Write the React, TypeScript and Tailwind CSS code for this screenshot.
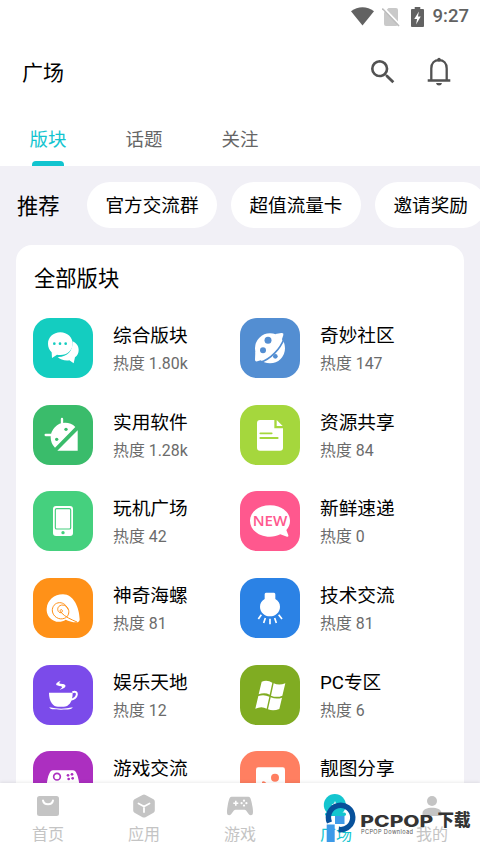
import type { ReactNode } from "react";

const tabs = ["版块", "话题", "关注"];
const chips = ["官方交流群", "超值流量卡", "邀请奖励"];

type Board = {
	name: string;
	heat: string;
	color: string;
	icon: ReactNode;
};

const boards: Board[] = [
	{
		name: "综合版块",
		heat: "1.80k",
		color: "bg-[#14cdc0]",
		icon: (
			<>
				<path d="M119 70c11 5 18 14 18 26 0 9-4 17-11 22l-4 18-13-9c-14 2-27-2-35-10 28 1 46-17 45-47z" />
				<path d="M82 43c21 0 37 15 37 34s-16 34-37 34c-4 0-7 0-10-1l-15 10-1-17c-7-7-11-16-11-26 0-19 16-34 37-34z" />
				<g fill="#14cdc0">
					<circle cx="64" cy="77" r="4" />
					<circle cx="81" cy="77" r="4" />
					<circle cx="98" cy="77" r="4" />
				</g>
			</>
		),
	},
	{
		name: "奇妙社区",
		heat: "147",
		color: "bg-[#538ed2]",
		icon: (
			<>
				<circle cx="90" cy="91" r="45" />
				<path d="M46 100l-1 25q0 7 7 5l20-6zM106 48l18-3q8-1 6 6l-7 22z" />
				<path
					d="M60 133C92 124 121 92 132 62"
					fill="none"
					stroke="#538ed2"
					strokeWidth="5"
				/>
				<g fill="#538ed2">
					<circle cx="84" cy="67" r="10.500" />
					<circle cx="69" cy="97" r="9" />
					<circle cx="106" cy="115" r="7" />
				</g>
			</>
		),
	},
	{
		name: "实用软件",
		heat: "1.28k",
		color: "bg-[#3abc6b]",
		icon: (
			<>
				<path d="M66 128A39 39 0 0 1 127 66z" />
				<path d="M134 76v61H73z" />
				<path
					d="M87 42v20M38 90h22"
					fill="none"
					stroke="#fff"
					strokeWidth="7"
					strokeLinecap="round"
				/>
				<circle cx="99" cy="73" r="5" fill="#3abc6b" />
				<circle cx="71" cy="103" r="5" fill="#3abc6b" />
			</>
		),
	},
	{
		name: "资源共享",
		heat: "84",
		color: "bg-[#a5d73d]",
		icon: (
			<>
				<path d="M60 45h43v25h26v58q0 9-9 9H60q-9 0-9-9V54q0-9 9-9z" />
				<path d="M110 45l18 18h-18z" />
				<path
					d="M61 85h34M61 99h52"
					fill="none"
					stroke="#a5d73d"
					strokeWidth="5.500"
					strokeLinecap="round"
				/>
			</>
		),
	},
	{
		name: "玩机广场",
		heat: "42",
		color: "bg-[#45d07e]",
		icon: (
			<>
				<rect x="60" y="45" width="60" height="90" rx="9" />
				<rect
					x="67"
					y="53"
					width="46"
					height="61"
					rx="4"
					fill="none"
					stroke="#45d07e"
					strokeWidth="3.500"
				/>
				<circle cx="90" cy="125" r="5" fill="#45d07e" />
			</>
		),
	},
	{
		name: "新鲜速递",
		heat: "0",
		color: "bg-[#ff588e]",
		icon: (
			<>
				<path d="M90 43c34 0 60 20 60 46 0 11-4 20-11 28l6 16q1 5-4 4l-20-7c-9 5-20 7-31 7-34 0-60-21-60-48s26-46 60-46z" />
				<text
					x="90"
					y="104"
					fill="#ff588e"
					fontSize="43"
					fontWeight="600"
					textAnchor="middle"
					textLength="104"
					lengthAdjust="spacingAndGlyphs"
					className="font-['Open_Sans',sans-serif]"
				>
					NEW
				</text>
			</>
		),
	},
	{
		name: "神奇海螺",
		heat: "81",
		color: "bg-[#ff9118]",
		icon: (
			<>
				<path d="M140 124c0 6-4 10-10 9-13 0-23-4-32-8-10 7-24 9-35 3-16-7-23-22-22-36 2-25 22-43 49-43 32 0 49 40 50 75z" />
				<path
					d="M132 132c-16-7-36-15-48-29-5-5-2-9 2-8 4 2 2 8-2 9-9 1-13-11-7-18 10-11 27-2 30 11 2 11-3 20-13 24-16 6-34-5-36-22-1-13 8-25 22-25 12 0 21 9 25 20"
					fill="none"
					stroke="#ff9118"
					strokeWidth="3"
				/>
			</>
		),
	},
	{
		name: "技术交流",
		heat: "81",
		color: "bg-[#2b82e5]",
		icon: (
			<>
				<path d="M78 44h24q4 0 4 5v14c9 5 14 13 14 23 0 16-13 29-30 29s-30-13-30-29c0-10 5-18 14-23V49q0-5 4-5z" />
				<path
					d="M64 110l-9 13M76 120l-5 15M90 122v17M104 120l5 15M116 110l10 13"
					fill="none"
					stroke="#fff"
					strokeWidth="5"
				/>
			</>
		),
	},
	{
		name: "娱乐天地",
		heat: "12",
		color: "bg-[#7b4bea]",
		icon: (
			<>
				<path d="M48 83h71c0 29-13 42-27 42H75c-14 0-27-14-27-42z" />
				<path
					d="M118 82c20-8 18 19-6 22"
					fill="none"
					stroke="#fff"
					strokeWidth="6"
				/>
				<path d="M49 127q36 8 70 0c-2 7-12 7-35 7s-33 0-35-7z" />
				<path d="M84 47c-12 4-18 10-12 14 5 3 16 2 15 6-1 3-4 5-7 7 13-2 19-8 17-13-3-6-17-3-18-7 0-2 2-5 5-7z" />
			</>
		),
	},
	{
		name: "PC专区",
		heat: "6",
		color: "bg-[#80ac22]",
		icon: (
			<>
				<path d="M65 50q17-6 32 3l-8 36q-15-8-33-1z" />
				<path d="M101 55q16 7 35 0l-9 37q-16 7-34 0z" />
				<path d="M55 93q17-6 33 2l-8 36q-15-9-34 0z" />
				<path d="M92 97q18 7 34 1l-8 34q-18 7-34 1z" />
			</>
		),
	},
	{
		name: "游戏交流",
		heat: "36",
		color: "bg-[#ac2fc0]",
		icon: (
			<>
				<path d="M60 58h60c9 0 14 15 17 30 4 24 6 40-9 38-10-2-15-18-23-18H75c-8 0-13 16-23 18-15 2-13-14-9-38 3-15 8-30 17-30z" />
				<circle cx="72" cy="77" r="10" fill="none" stroke="#ac2fc0" strokeWidth="5" />
				<g fill="#ac2fc0">
					<circle cx="105" cy="73" r="4" />
					<circle cx="117" cy="70" r="4" />
					<circle cx="107" cy="84" r="4" />
					<circle cx="119" cy="82" r="4" />
				</g>
			</>
		),
	},
	{
		name: "靓图分享",
		heat: "25",
		color: "bg-[#ff7f61]",
		icon: (
			<>
				<rect x="48" y="49" width="87" height="84" rx="7" />
				<circle cx="105" cy="80" r="12" fill="#ff7f61" />
				<path d="M66 124V92q8-4 14 6l20 26z" fill="#ff7f61" />
			</>
		),
	},
];

const navItems = [
	{
		label: "首页",
		icon: (
			<>
				<rect x="1" y="2" width="22" height="20" rx="2.500" />
				<path d="M7 6.500c1 5 9 5 10 0" fill="none" stroke="#fff" strokeWidth="2" strokeLinecap="round" />
			</>
		),
	},
	{
		label: "应用",
		icon: (
			<>
				<path d="M10.500 1q1.500-.8 3 0l8 4.200q1.300.8 1.300 2.300v9q0 1.500-1.300 2.300l-8 4.400q-1.500.8-3 0l-8-4.400q-1.300-.8-1.300-2.300v-9q0-1.500 1.300-2.300z" />
				<path d="M6.500 9.500l5.500 3 5.500-3M12 12.500V18" fill="none" stroke="#fff" strokeWidth="1.800" strokeLinecap="round" />
			</>
		),
	},
	{
		label: "游戏",
		icon: (
			<>
				<path d="M3.500 2.800h17c2.300 0 3.100 5 4 10 .8 5 1 8.500-1.700 8.500-2.500 0-4-5.500-6.300-5.500h-9c-2.300 0-3.800 5.500-6.300 5.500-2.700 0-2.500-3.500-1.700-8.500.9-5 1.700-10 4-10z" />
				<path d="M5.300 9.300h5M7.800 6.800v5" stroke="#fff" strokeWidth="1.600" />
				<g fill="#fff">
					<circle cx="16" cy="6.700" r="1.100" />
					<circle cx="16" cy="11.600" r="1.100" />
					<circle cx="13.600" cy="9.200" r="1.100" />
					<circle cx="18.400" cy="9.200" r="1.100" />
				</g>
			</>
		),
	},
	{
		label: "广场",
		active: true,
		icon: (
			<>
				<circle cx="10.800" cy="11" r="11" />
				<rect x="1" y="18.500" width="21" height="3.500" rx="1.700" />
				<path d="M11 7l1 2.500 2.500 1-2.500 1-1 2.500-1-2.500-2.500-1 2.500-1z" fill="#fff" />
			</>
		),
	},
	{
		label: "我的",
		icon: (
			<>
				<circle cx="12" cy="7" r="5" />
				<path d="M2.500 22v-3c0-7 19-7 19 0v3z" />
			</>
		),
	},
];

function StatusBar() {
	return (
		<div className="flex h-8 items-center justify-end pt-px pr-[11px] text-[#626262]">
			<svg width="23" height="19" viewBox="0 0 23 19" fill="currentColor">
				<path d="M0 4.200C7-1 16-1 23 4.200L11.500 18.500z" />
			</svg>
			<svg className="ml-2" width="18" height="20" viewBox="0 0 18 20">
				<path d="M6.500 1H14q2 0 2 2v14q0 2-2 2H4q-2 0-2-2V5.500z" fill="#c9c9c9" />
				<path d="M1.300 .5L18 18" stroke="#fff" strokeWidth="2" />
				<path d="M.3 1.500L17 19" stroke="#bdbdbd" strokeWidth="1.600" />
			</svg>
			<svg className="ml-[11px]" width="13" height="20" viewBox="0 0 14 20" preserveAspectRatio="none" fill="currentColor">
				<path d="M4 0h6v2h3q1 0 1 1v16q0 1-1 1H1q-1 0-1-1V3q0-1 1-1h3z" />
				<path d="M8.500 4.500L3.500 12h3l-1 5.500 5-8h-3z" fill="#fff" />
			</svg>
			<span className="ml-[9px] text-[18.500px] leading-none font-medium">9:27</span>
		</div>
	);
}

function Header() {
	return (
		<div className="flex h-20 items-center pr-[25px] pl-[22px]">
			<h1 className="flex-1 pt-0.5 text-[21px] leading-none text-black">广场</h1>
			<svg width="32" height="32" viewBox="0 0 24 24" fill="#525252">
				<path d="M15.500 14h-.79l-.28-.27A6.471 6.471 0 0 0 16 9.500 6.500 6.500 0 1 0 9.500 16c1.610 0 3.090-.59 4.230-1.570l.27.28v.79l5 4.990L20.490 19l-4.990-5zm-6 0C7.010 14 5 11.990 5 9.500S7.010 5 9.500 5 14 7.010 14 9.500 11.990 14 9.500 14z" />
			</svg>
			<svg
				className="ml-6"
				width="32"
				height="32"
				viewBox="0 0 32 32"
				fill="none"
				stroke="#525252"
				strokeWidth="2.300"
			>
				<path d="M8.300 24V12.500C8.300 7 11.500 4.200 16 4.200s7.700 2.800 7.700 8.300V24M4.700 24.500h22.600" />
				<path d="M16 4V3.500" strokeWidth="3.500" strokeLinecap="round" />
				<path d="M13 27h6q-.5 2.500-3 2.500T13 27z" fill="#525252" stroke="none" />
			</svg>
		</div>
	);
}

function Tabs() {
	return (
		<div className="flex h-[53.500px]">
			{tabs.map((tab, i) => (
				<div
					key={tab}
					className={`flex w-24 flex-col items-center justify-between pt-[18px] text-[18.500px] leading-5 ${i === 0 ? "text-[#12c4cf]" : "text-[#666]"}`}
				>
					{tab}
					{i === 0 && <div className="h-[4.500px] w-8 rounded-t bg-[#12c4cf]" />}
				</div>
			))}
		</div>
	);
}

function BoardItem({ name, heat, color, icon }: Board) {
	return (
		<div className="flex h-[60px]">
			<div className={`size-[60px] shrink-0 rounded-[17px] ${color}`}>
				<svg width="60" height="60" viewBox="0 0 180 180" fill="#fff">
					{icon}
				</svg>
			</div>
			<div className="ml-5 whitespace-nowrap">
				<div className="mt-[5px] text-[18.670px] leading-[26px] text-black">{name}</div>
				<div className="mt-[3px] text-[15.900px] leading-6 text-[#6b6b6b]">热度 {heat}</div>
			</div>
		</div>
	);
}

function BottomNav() {
	return (
		<nav className="relative z-10 flex h-[70px] shrink-0 bg-white shadow-[0_-1px_3px_rgba(0,0,0,0.08)]">
			{navItems.map((item) => (
				<div
					key={item.label}
					className={`flex flex-1 flex-col items-center pt-[11px] ${item.active ? "text-[#14c5cf]" : "text-[#c4c4c4]"}`}
				>
					<svg className="overflow-visible" width="24" height="24" viewBox="0 0 24 24" fill="currentColor">
						{item.icon}
					</svg>
					<span className="mt-[5px] text-[16px] leading-6">{item.label}</span>
				</div>
			))}
		</nav>
	);
}

function Watermark() {
	return (
		<svg
			className="absolute right-0 bottom-0 z-20"
			width="160"
			height="56"
			viewBox="320 797 160 56"
		>
			<path d="M335 824h9.500v-8H335zM326.700 824.500h8V842h-8z" fill="#3d9ae8" />
			<path d="M329.500 822.500a12.200 12.200 0 1 1 9.200 7" fill="none" stroke="#07519b" strokeWidth="5.400" />
			<text
				x="360.300"
				y="826.500"
				fontSize="15.500"
				fontWeight="800"
				fill="#343434"
				textLength="73"
				lengthAdjust="spacingAndGlyphs"
				className="font-['Inter',sans-serif]"
			>
				PCPOP
			</text>
			<text
				x="437.500"
				y="826"
				fontSize="16.500"
				fontWeight="900"
				fill="#343434"
				textLength="33"
				lengthAdjust="spacingAndGlyphs"
				className="font-['Noto_Sans_CJK_SC',sans-serif]"
			>
				下载
			</text>
			<text
				x="361"
				y="833.500"
				fontSize="5.600"
				fill="#555"
				textLength="52"
				className="font-['Inter',sans-serif]"
			>
				PCPOP Download
			</text>
		</svg>
	);
}

export default function App() {
	return (
		<div className="relative flex h-[853px] w-[480px] flex-col overflow-hidden bg-white font-[Roboto,'Noto_Sans_CJK_SC',sans-serif]">
			<StatusBar />
			<Header />
			<Tabs />
			<main className="min-h-0 flex-1 overflow-hidden bg-[#f1f0f6] px-4 pt-[16.500px]">
				<div className="flex h-[46px] items-center gap-3.5 whitespace-nowrap">
					<h2 className="w-[57px] shrink-0 pt-[3px] pl-px text-[21.300px] leading-none text-black">推荐</h2>
					{chips.map((chip) => (
						<div
							key={chip}
							className="flex h-[46px] shrink-0 items-center rounded-full bg-white px-[18.500px] pt-[3px] text-[18.600px] text-black"
						>
							{chip}
						</div>
					))}
				</div>
				<section className="mt-[17px] rounded-2xl bg-white pt-[19px] pl-[17px]">
					<h2 className="h-[54px] pl-px text-[21.300px] leading-[30px] text-black">全部版块</h2>
					<div className="grid grid-cols-[207px_207px] gap-y-[26.670px]">
						{boards.map((board) => (
							<BoardItem key={board.name} {...board} />
						))}
					</div>
				</section>
			</main>
			<BottomNav />
			<Watermark />
		</div>
	);
}
